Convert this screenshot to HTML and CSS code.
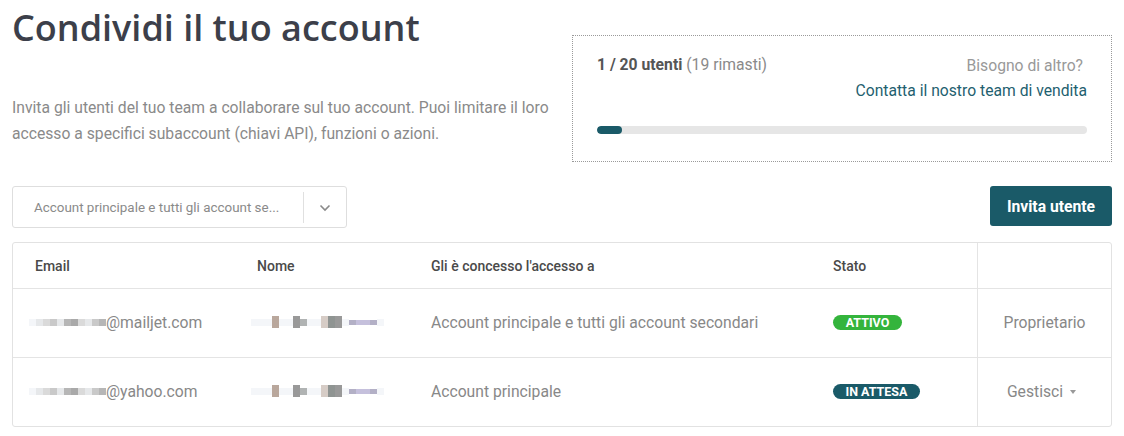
FILE: index.html
```html
<!DOCTYPE html>
<html lang="it">
<head>
<meta charset="utf-8">
<link rel="stylesheet" href="styles.css">
</head>
<body>
<div class="page">
  <section class="top">
    <div class="intro">
      <h1 class="title">Condividi il tuo account</h1>
      <p class="desc">Invita gli utenti del tuo team a collaborare sul tuo account. Puoi limitare il loro accesso a specifici subaccount (chiavi API), funzioni o azioni.</p>
    </div>
    <div class="quota">
      <div class="quota-head">
        <div class="count"><b>1 / 20 utenti</b> (19 rimasti)</div>
        <div class="need">
          <div class="need-q">Bisogno di altro?</div>
          <a class="need-link">Contatta il nostro team di vendita</a>
        </div>
      </div>
      <div class="bar"><div class="bar-fill" style="width:25px"></div></div>
    </div>
  </section>

  <section class="toolbar">
    <div class="select">
      <span class="select-text">Account principale e tutti gli account se...</span>
      <span class="select-sep"></span>
      <span class="select-arrow">
        <svg width="12" height="8" viewBox="0 0 12 8"><path d="M1.5 1.5 L6 6 L10.5 1.5" fill="none" stroke="#8a8a8a" stroke-width="1.6"/></svg>
      </span>
    </div>
    <button class="invite">Invita utente</button>
  </section>

  <div class="table">
    <div class="row head">
      <div class="cell">Email</div>
      <div class="cell">Nome</div>
      <div class="cell">Gli è concesso l'accesso a</div>
      <div class="cell">Stato</div>
      <div class="cell action"></div>
    </div>
    <div class="row">
      <div class="cell email">
        <span class="redact r-email"><i class="c0"></i><i class="c1"></i><i class="c4"></i><i class="c2"></i><i class="c1"></i><i class="c3"></i><i class="c5"></i><i class="c4"></i><i class="c1"></i><i class="c2"></i><i class="c3"></i></span>@mailjet.com
      </div>
      <div class="cell name">
        <span class="redact r-name"><i class="c0"></i><i class="c0"></i><i class="c0"></i><i class="n1"></i><i class="c0"></i><i class="c0"></i><i class="n2"></i><i class="n3"></i><i class="c0"></i><i class="c0"></i><i class="n4"></i><i class="n5"></i><i class="n2"></i><i class="c0"></i><i class="n6"></i><i class="n7"></i><i class="n7"></i><i class="n6"></i><i class="c0"></i></span>
      </div>
      <div class="cell">Account principale e tutti gli account secondari</div>
      <div class="cell"><span class="badge active">ATTIVO</span></div>
      <div class="cell action">Proprietario</div>
    </div>
    <div class="row">
      <div class="cell email">
        <span class="redact r-email"><i class="c0"></i><i class="c1"></i><i class="c4"></i><i class="c2"></i><i class="c1"></i><i class="c3"></i><i class="c5"></i><i class="c4"></i><i class="c1"></i><i class="c2"></i><i class="c3"></i></span>@yahoo.com
      </div>
      <div class="cell name">
        <span class="redact r-name"><i class="c0"></i><i class="c0"></i><i class="c0"></i><i class="n1"></i><i class="c0"></i><i class="c0"></i><i class="n2"></i><i class="n3"></i><i class="c0"></i><i class="c0"></i><i class="n4"></i><i class="n5"></i><i class="n2"></i><i class="c0"></i><i class="n6"></i><i class="n7"></i><i class="n7"></i><i class="n6"></i><i class="c0"></i></span>
      </div>
      <div class="cell">Account principale</div>
      <div class="cell"><span class="badge pending">IN ATTESA</span></div>
      <div class="cell action gestisci">Gestisci <span class="caret"></span></div>
    </div>
  </div>
</div>
</body>
</html>
```

FILE: styles.css
```css
* { box-sizing: border-box; }
html, body { margin: 0; padding: 0; background: #fff; }
body { font-family: Roboto, "Liberation Sans", sans-serif; color: #888; }
.page { padding: 0 12px; width: 1124px; }

.top { display: flex; justify-content: space-between; align-items: flex-start; }
.intro { width: 548px; }
.title {
  margin: 0; padding-top: 4px;
  font-family: "Open Sans", "Noto Sans", sans-serif;
  font-size: 36px; font-weight: 600; line-height: 48px;
  color: #3c3f4a; letter-spacing: 0;
}
.desc { margin: 43px 0 0; font-size: 15.7px; line-height: 26px; color: #8a8a8a; }

.quota {
  margin-top: 35px; width: 540px; height: 127px;
  border: 1px dotted #9a9a9a;
  padding: 17px 24px 0 24px;
}
.quota-head { display: flex; justify-content: space-between; align-items: flex-start; }
.count { font-size: 15.7px; line-height: 24px; color: #8a8a8a; }
.count b { color: #555; font-weight: 700; }
.need { text-align: right; font-size: 15.7px; line-height: 25px; }
.need-q { color: #999; padding-right: 4px; }
.need-link { color: #1f5f6f; }
.bar { margin-top: 23px; height: 8px; border-radius: 4px; background: #e6e6e6; overflow: hidden; }
.bar-fill { height: 100%; background: #1a5a68; border-radius: 4px; }

.toolbar { display: flex; justify-content: space-between; align-items: flex-start; margin-top: 24px; }
.select {
  width: 335px; height: 42px; border: 1px solid #dedede; border-radius: 3px;
  display: flex; align-items: center; padding-left: 21px;
}
.select-text { width: 269px; font-size: 13.4px; color: #8a8a8a; }
.select-sep { width: 1px; height: 31px; background: #e0e0e0; }
.select-arrow { flex: 1; display: flex; justify-content: center; padding-top: 2px; }
.invite {
  width: 122px; height: 40px; border: 0; border-radius: 3px;
  background: #1a5a68; color: #fff; font-family: Roboto, sans-serif;
  font-size: 15.7px; font-weight: 700; cursor: pointer;
}

.table { margin-top: 14px; border: 1px solid #e2e2e2; border-radius: 3px; width: 1100px; }
.row { display: grid; grid-template-columns: 222px 174px 402px 166px 1fr; height: 69px; border-top: 1px solid #e4e4e4; }
.row.head { height: 45px; border-top: 0; }
.row:not(.head) .cell { padding-bottom: 2px; }
.cell { display: flex; align-items: center; padding-left: 22px; font-size: 15.7px; color: #888; white-space: nowrap; }
.head .cell { font-size: 14px; color: #4a4a4a; font-weight: 500; }
.cell.action { border-left: 1px solid #e4e4e4; justify-content: center; padding-left: 0; }
.cell.gestisci { padding-right: 6px; }
.cell.email { padding-left: 16px; }
.cell.name { padding-left: 16px; }

.redact { display: inline-flex; align-items: center; height: 14px; }
.redact i { display: inline-block; width: 7px; height: 7px; }
.c0 { background: #f4f6f9; }
.c1 { background: #e6e8ea; }
.c2 { background: #c9c9c9; }
.c3 { background: #b6b6b6; }
.c4 { background: #dadada; }
.c5 { background: #a9a9a9; }
.n1 { background: #b9a79c; height: 12px !important; }
.n2 { background: #999; height: 12px !important; }
.n3 { background: #b0b3b3; }
.n4 { background: #d6ccc6; height: 12px !important; }
.n5 { background: #8f9492; height: 12px !important; }
.n6 { background: #b3b0c6; height: 5px !important; }
.n7 { background: #c5c0dc; height: 5px !important; }

.badge {
  display: inline-block; height: 15px; line-height: 15px; border-radius: 8px;
  font-size: 12.5px; font-weight: 700; color: #fff; text-align: center;
}
.badge.active { width: 69px; background: #34b43c; }
.badge.pending { width: 87px; background: #1a5a68; }

.caret {
  display: inline-block; width: 0; height: 0; margin-left: 7px; margin-top: 2px;
  border-left: 3.5px solid transparent; border-right: 3.5px solid transparent; border-top: 4px solid #999;
}
```
